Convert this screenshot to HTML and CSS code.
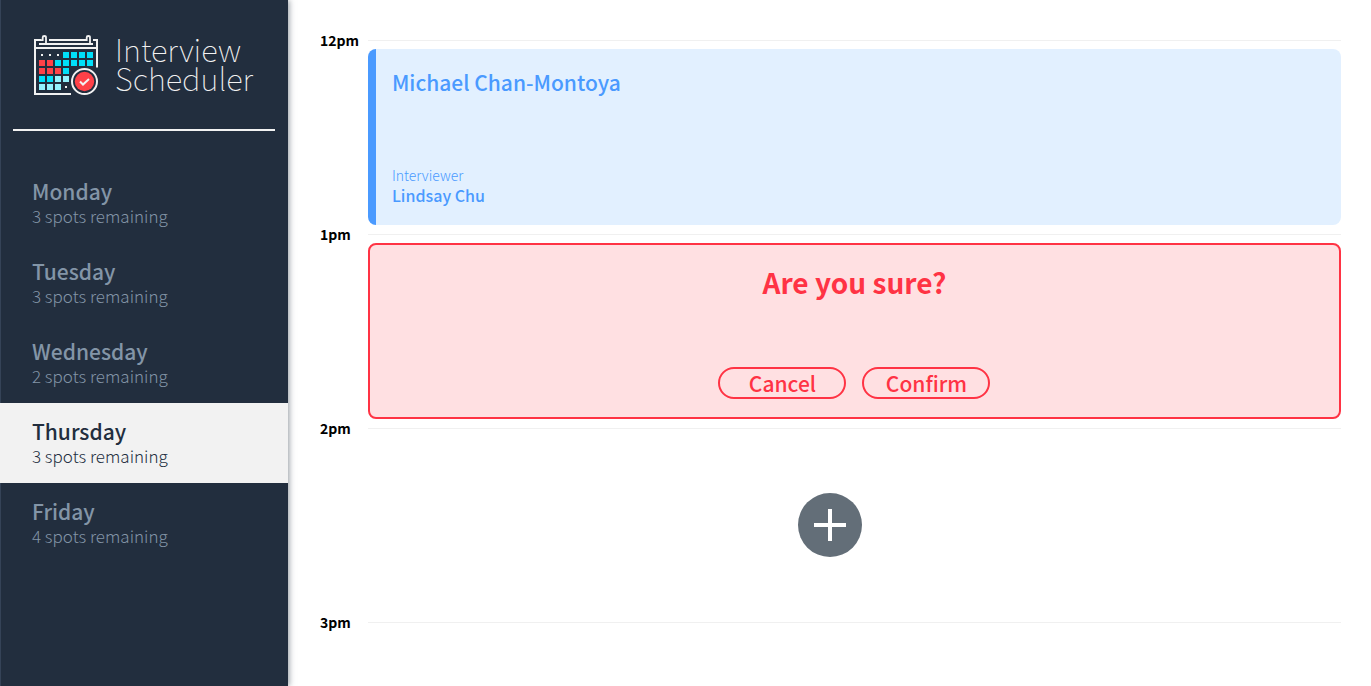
FILE: index.html
```html
<!DOCTYPE html>
<html lang="en">
<head>
<meta charset="utf-8">
<title>Interview Scheduler</title>
<link rel="stylesheet" href="styles.css">
</head>
<body>
<div class="layout">
  <aside class="sidebar">
    <div class="logo">
      <svg class="logo-icon" width="66" height="62" viewBox="33 34 66 62" fill="none" aria-hidden="true">
        <g stroke="#f2f2f2" stroke-width="2">
          <path d="M41 40H35V94H71M93 40H97V67.500M35 48H97M39 44H93M49 40H86"/>
          <path d="M41 40.200H42.700V37.500Q42.700 36 44.300 36Q46 36 46 37.500V44M85 40.200H86.700V37.500Q86.700 36 88.300 36Q90 36 90 37.500V44" stroke-width="1.800"/>
        </g>
        <path fill="#f2f2f2" d="M41 54h2v2h-2zM49 54h2v2h-2zM57 54h2v2h-2zM65 86h2v2h-2z"/>
        <path fill="#ff4148" d="M39 60h6v6h-6zM47 60h6v6h-6zM39 68h6v6h-6zM47 68h6v6h-6zM55 68h6v6h-6z"/>
        <path fill="#00e0fa" d="M63 52h6v6h-6zM71 52h6v6h-6zM79 52h6v6h-6zM87 52h6v6h-6zM55 60h6v6h-6zM63 60h6v6h-6zM71 60h6v6h-6zM79 60h6v6h-6zM87 60h6v6h-6zM63 68h6v6h-6zM39 76h6v6h-6zM47 76h6v6h-6z"/>
        <path fill="#94f3ff" d="M55 76h6v6h-6zM63 76h6v6h-6zM39 84h6v6h-6zM47 84h6v6h-6zM55 84h6v6h-6z"/>
        <circle cx="84.500" cy="81.500" r="12.500" fill="#222e3e" stroke="#f2f2f2" stroke-width="2"/>
        <circle cx="84.500" cy="81.500" r="9.700" fill="#ff4148"/>
        <path d="M80 81.500L83 84.500L89 79" stroke="#f2f2f2" stroke-width="2"/>
      </svg>
      <div class="logo-text">Interview<br>Scheduler</div>
    </div>
    <hr class="divider">
    <nav class="days">
      <button class="day"><span class="day-name">Monday</span><span class="day-spots">3 spots remaining</span></button>
      <button class="day"><span class="day-name">Tuesday</span><span class="day-spots">3 spots remaining</span></button>
      <button class="day"><span class="day-name">Wednesday</span><span class="day-spots">2 spots remaining</span></button>
      <button class="day day-selected" aria-current="true"><span class="day-name">Thursday</span><span class="day-spots">3 spots remaining</span></button>
      <button class="day"><span class="day-name">Friday</span><span class="day-spots">4 spots remaining</span></button>
    </nav>
  </aside>
  <main class="schedule">
    <section class="slot">
      <header class="slot-head"><h2 class="slot-time">12pm</h2><hr class="slot-line"></header>
      <article class="card booked">
        <h3 class="student">Michael Chan-Montoya</h3>
        <div>
          <h4 class="role">Interviewer</h4>
          <p class="interviewer">Lindsay Chu</p>
        </div>
      </article>
    </section>
    <section class="slot">
      <header class="slot-head"><h2 class="slot-time">1pm</h2><hr class="slot-line"></header>
      <article class="card confirm">
        <h3 class="question">Are you sure?</h3>
        <div class="actions">
          <button class="pill">Cancel</button>
          <button class="pill">Confirm</button>
        </div>
      </article>
    </section>
    <section class="slot">
      <header class="slot-head"><h2 class="slot-time">2pm</h2><hr class="slot-line"></header>
      <div class="empty">
        <button class="add" aria-label="Add">
          <svg width="64" height="64" viewBox="0 0 64 64" aria-hidden="true"><circle cx="32" cy="32" r="32" fill="#636e78"/><path d="M16 32H48M32 16V48" stroke="#fff" stroke-width="4"/></svg>
        </button>
      </div>
    </section>
    <section class="slot">
      <header class="slot-head"><h2 class="slot-time">3pm</h2><hr class="slot-line"></header>
    </section>
  </main>
</div>
</body>
</html>
```
FILE: styles.css
```css
* { box-sizing: border-box; margin: 0; padding: 0; }
body {
  font-family: "Noto Sans CJK JP", "Noto Sans", sans-serif;
  background: #fff;
  color: #000;
}
button { font: inherit; background: none; border: 0; cursor: pointer; }
.layout { display: flex; height: 100vh; overflow: hidden; }
.sidebar {
  width: 21%;
  flex: none;
  background: #222e3e;
  border-left: 1px solid #354357;
  box-shadow: 1px 0 6px rgba(34, 46, 62, .5);
}
.logo { display: flex; gap: 16px; padding: 34px 0 0 32px; }
.logo-text { color: #f2f2f2; font-size: 31px; font-weight: 100; line-height: 29px; white-space: nowrap; }
.divider { border: 0; height: 2px; background: #f2f2f2; margin: 33px 13px 32px 12px; }
.day {
  display: flex;
  flex-direction: column;
  justify-content: center;
  width: 100%;
  height: 80px;
  padding-left: 31px;
  text-align: left;
  color: #8395a7;
}
.day-name { font-size: 21px; font-weight: 500; line-height: 26px; }
.day-spots { font-size: 17px; font-weight: 300; line-height: 24px; }
.day-selected { background: #f2f2f2; color: #222e3e; margin-left: -1px; width: calc(100% + 1px); padding-left: 32px; }
.schedule { flex: 1; padding: 31px 30px 0 32px; }
.slot-head { display: flex; align-items: center; justify-content: space-between; height: 18px; }
.slot-time { font-size: 14px; font-weight: 700; line-height: 18px; min-width: 48px; }
.slot-line { flex: 1; border: 0; height: 1px; background: #f0f0f0; }
.card { height: 176px; margin-left: 48px; border-radius: 8px; display: flex; flex-direction: column; justify-content: space-between; }
.booked { background: #e2f0ff; border-left: 8px solid #4a9aff; color: #4a9aff; padding: 19px 16px 20px; }
.student { font-size: 21px; font-weight: 500; line-height: 28px; }
.role { font-size: 14px; font-weight: 300; line-height: 20px; }
.interviewer { font-size: 16px; font-weight: 500; line-height: 20px; }
.confirm { background: #ffe0e2; border: 2px solid #ff3344; color: #ff3344; align-items: center; padding: 19px 16px 18px; }
.question { font-size: 28px; font-weight: 700; line-height: 36px; }
.actions { display: flex; gap: 16px; }
.pill { width: 128px; height: 32px; border: 2px solid #ff3344; border-radius: 16px; color: #ff3344; font-size: 21px; font-weight: 500; line-height: 26px; }
.empty { height: 176px; display: flex; align-items: center; justify-content: center; }
.add { width: 64px; height: 64px; border-radius: 50%; }
.add svg { display: block; }
```
